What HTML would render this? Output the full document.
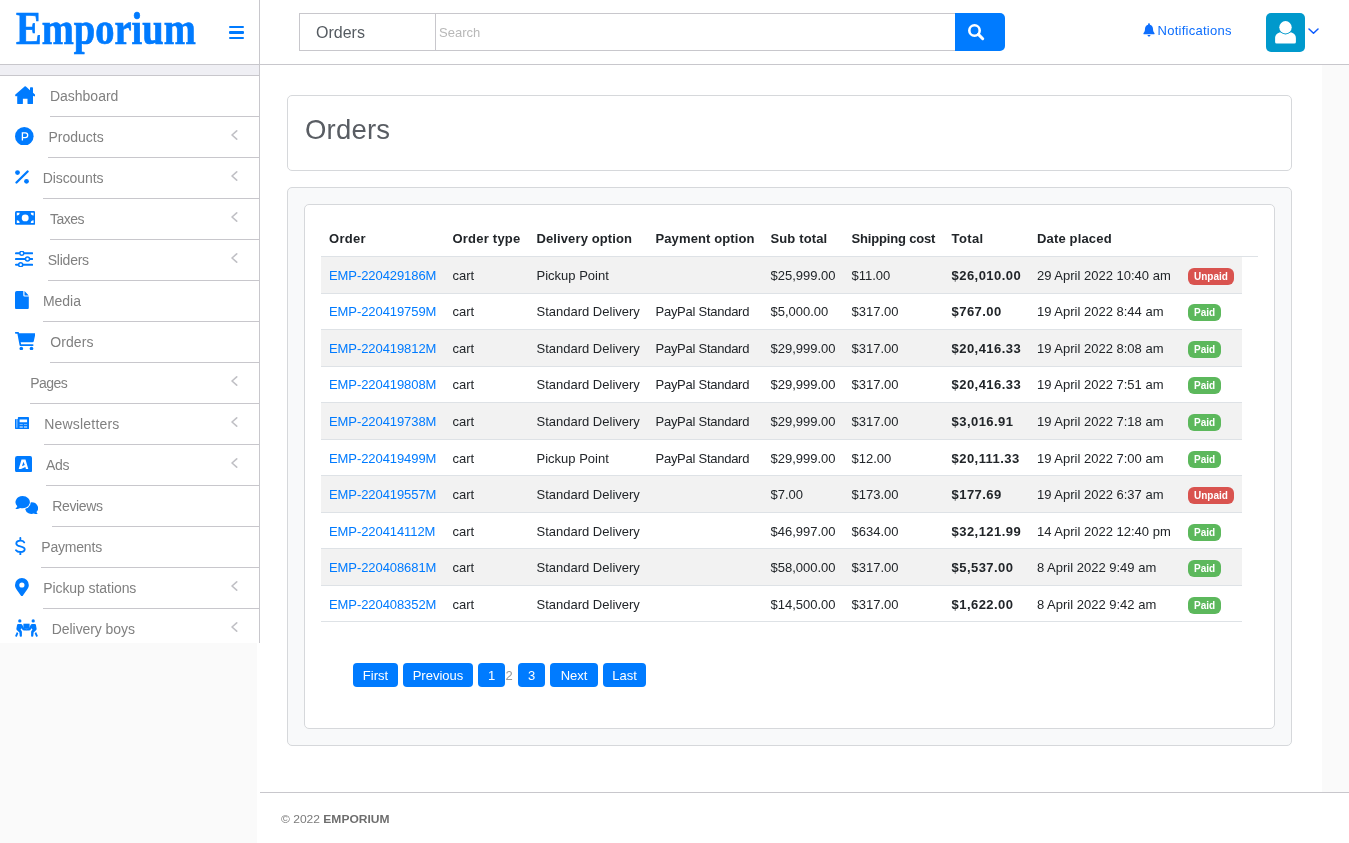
<!DOCTYPE html>
<html lang="en">
<head>
<meta charset="utf-8">
<title>Orders - Emporium</title>
<style>
*{box-sizing:border-box;margin:0;padding:0}
html,body{width:1349px;height:843px;overflow:hidden;background:#fff}
body{font-family:"Liberation Sans",sans-serif;font-size:13px;color:#212529;position:relative;will-change:transform}
a{text-decoration:none;color:#007bff}
/* ---------- top bar ---------- */
#topbar{position:absolute;left:0;top:0;width:1349px;height:65px;background:#fff;border-bottom:1px solid #c8c7cc}
#logo{position:absolute;left:16px;top:2.2px;font-family:"Liberation Serif",serif;font-weight:bold;font-size:45.6px;line-height:54px;color:#007bff;-webkit-text-stroke:.7px #007bff;transform-origin:0 0;transform:scaleX(.845);white-space:nowrap}
#burger{position:absolute;left:229px;top:26px;width:15px;height:13px}
#burger i{position:absolute;left:0;width:15px;height:2.2px;border-radius:1px;background:#007bff}
#search{position:absolute;left:299px;top:13px;height:38px;width:706px}
#search .sel{position:absolute;left:0;top:0;width:137px;height:38px;border:1px solid #c8c7cc;font-size:16px;line-height:38px;padding-left:16px;color:#555b61}
#search .inp{position:absolute;left:136px;top:0;width:521px;height:38px;border:1px solid #c8c7cc;font-size:13px;line-height:37px;padding-left:3px;color:#b8b8b8}
#search .btn{position:absolute;left:656px;top:0;width:50px;height:38px;background:#007bff;border-radius:0 5px 5px 0}
#notif{position:absolute;left:1142.6px;top:23px;font-size:13px;line-height:16px;color:#0d6efd;white-space:nowrap;letter-spacing:.27px}
#avatar{position:absolute;left:1266px;top:13px;width:39px;height:39px;border-radius:5px;background:#0099cc;overflow:hidden}
#caret{position:absolute;left:1307.8px;top:27.6px}
/* ---------- sidebar ---------- */
#side{position:absolute;left:0;top:0;width:260px;height:643px;border-right:1px solid #c8c7cc;background:transparent}
#band{position:absolute;left:0;top:65px;width:259px;height:11px;background:#efeff4;border-bottom:1px solid #c8c7cc}
#menu{position:absolute;left:0;top:76px;width:259px;list-style:none;background:#fff}
#menu li{position:relative;height:41px;display:flex;align-items:stretch;padding-left:15px}
#menu li:last-child{height:34px}
#menu .ic{flex:none;height:38px;display:flex;align-items:center}
#menu .tx{flex:1;margin-left:15px;height:41px;border-bottom:1px solid #c8c7cc;font-size:14px;line-height:40px;color:#808080;white-space:nowrap}
#menu li:last-child .tx{border-bottom:0}
#menu .noic .tx{margin-left:15px}
#menu .chev{position:absolute;left:231px;top:13.4px}
#below{position:absolute;left:0;top:643px;width:257px;height:200px;background:#fafafa}
/* ---------- content ---------- */
#rightcol{position:absolute;left:1322px;top:65px;width:27px;height:727px;background:#fafafa}
.card{position:absolute;border:1px solid #d6d8db;border-radius:5px}
#c1{left:287px;top:95px;width:1005px;height:76px;background:#fff}
#c1 h1{position:absolute;left:17px;top:16.8px;font-size:27.5px;line-height:34px;font-weight:normal;color:#595d63;letter-spacing:.2px}
#c2{left:287px;top:187px;width:1005px;height:559px;background:#f8f9fa}
#c3{left:304px;top:204px;width:971px;height:525px;background:#fff}
table{position:absolute;left:321px;top:220.5px;width:937px;border-collapse:separate;border-spacing:0;table-layout:fixed;font-size:13px;line-height:19.5px}
th{text-align:left;font-weight:bold;padding:8px;height:36.5px;border-bottom:1px solid #dee2e6;white-space:nowrap;color:#212529}
td{padding:8.5px 8px 7.5px;height:36.5px;border-bottom:1px solid #dee2e6;white-space:nowrap;overflow:visible}
tbody tr:nth-child(6) td,tbody tr:nth-child(8) td,tbody tr:nth-child(10) td{padding:9.5px 8px 6.5px}
td.x{border:0;background:transparent!important}
tbody tr:nth-child(odd) td{background:#f2f2f2}
td b{font-weight:bold;letter-spacing:.46px}
td a{color:#007bff;letter-spacing:-.08px}
.bd{display:inline-block;font-size:10px;font-weight:bold;line-height:17px;height:17px;color:#fff;border-radius:6px;padding:0 6px;vertical-align:middle;position:relative;top:0}
.bd.r{background:#d9534f;width:46px}
.bd.g{background:#5cb85c;width:33px}
#pg{position:absolute;left:353px;top:663px;height:24px;white-space:nowrap;font-size:13px;line-height:26px}
#pg a{position:absolute;top:0;height:24px;background:#007bff;color:#fff;border-radius:4px;text-align:center}
#pg span{position:absolute;top:0;color:#999}
#footer{position:absolute;left:260px;top:792px;width:1089px;height:51px;border-top:1px solid #c8c7cc;background:#fff;font-size:12px;color:#7b7b7b;line-height:16px}
#footer div{position:absolute;left:20.6px;top:17.5px;white-space:nowrap;font-size:10.9px;transform:scaleX(1.105);transform-origin:0 50%}
#footer b{color:#6e6e6e}
</style>
</head>
<body>
<div id="topbar">
  <div id="logo">Emporium</div>
  <div id="burger"><i style="top:0"></i><i style="top:5.4px"></i><i style="top:10.8px"></i></div>
  <div id="search">
    <div class="sel">Orders</div>
    <div class="inp">Search</div>
    <div class="btn"><svg width="50" height="38" viewBox="0 0 50 38"><circle cx="19.5" cy="17.5" r="5.2" fill="none" stroke="#fff" stroke-width="2.6"/><path d="M23.4 21.4l4.3 4.3" stroke="#fff" stroke-width="3" stroke-linecap="round"/></svg></div>
  </div>
  <div id="notif"><svg width="12" height="13.7" viewBox="0 0 12 13" preserveAspectRatio="none" style="position:absolute;left:0;top:0.3px"><path d="M6 0.300c.5 0 .9.400.9.900v.400c1.900.400 3.100 1.900 3.100 3.900 0 2.300.700 3.300 1.400 4 .200.200.300.500.200.800-.100.300-.400.500-.700.500H1.100c-.300 0-.600-.200-.700-.500-.100-.300 0-.600.200-.800.700-.700 1.400-1.700 1.400-4 0-2 1.200-3.500 3.100-3.900v-.400c0-.500.400-.900.900-.900zM4.500 11.400h3c0 .800-.700 1.500-1.500 1.500s-1.500-.700-1.500-1.500z" fill="#0d6efd"/></svg><span style="position:absolute;left:14.9px;top:0.3px">Notifications</span></div>
  <div id="avatar"><svg width="39" height="39" viewBox="0 0 39 39"><path d="M9.100 28.900V25C9.100 21 13.200 18.600 19.500 18.600S29.900 21 29.900 25V28.900Q29.900 30.400 28.400 30.400H10.600Q9.100 30.400 9.100 28.900z" fill="#fff"/><circle cx="19.500" cy="14.300" r="7.100" fill="#0099cc"/><circle cx="19.500" cy="14.300" r="6.200" fill="#fff"/></svg></div>
  <svg id="caret" width="11" height="7" viewBox="0 0 11 7"><path d="M1 1l4.500 4.300L10 1" fill="none" stroke="#0d5cff" stroke-width="1.500" stroke-linecap="round" stroke-linejoin="round"/></svg>
</div>

<div id="band"></div>
<ul id="menu">
  <li><span class="ic"><svg width="20.4" height="18.3" viewBox="0 0 20.4 18.3" ><path fill="#007bff" d="M10.2 0.100L0.400 8.500Q-0.200 9.200 0.400 9.900L1.100 10.600L2.200 9.800V17.400Q2.200 18.100 2.900 18.100H7.200Q7.900 18.100 7.900 17.400V12.800H12.500V17.400Q12.500 18.100 13.200 18.100H17.300Q18 18.100 18 17.400V9.800L19.300 10.600L20 9.900Q20.600 9.200 20 8.500L18 6.800V1.900Q18 1.200 17.300 1.200H15.700Q15 1.200 15 1.900V4.200L10.900 0.600Q10.200 -0.100 9.500 0.600z"/></svg></span><span class="tx" style="margin-left:14.5px">Dashboard</span></li>
  <li><span class="ic"><svg width="18.6" height="18.6" viewBox="0 0 18.6 18.6" ><circle cx="9.3" cy="9.3" r="9.3" fill="#007bff"/><path d="M7.400 13.500V5.900H10.300a2.400 2.400 0 0 1 0 4.800H7.400" fill="none" stroke="#fff" stroke-width="1.300" stroke-linejoin="miter"/></svg></span><span class="tx" style="margin-left:14.9px">Products</span><svg class="chev" width="7" height="10" viewBox="0 0 7 10"><path d="M5.700 0.900L1 5L5.700 9.100" fill="none" stroke="#c0c0c5" stroke-width="1.600" stroke-linecap="round" stroke-linejoin="round"/></svg></li>
  <li><span class="ic"><svg width="14" height="14" viewBox="0 0 14 14" ><circle cx="2.5" cy="2.6" r="2.4" fill="#007bff"/><circle cx="11.5" cy="11.300" r="2.4" fill="#007bff"/><path d="M1.500 12.500L12.600 1.500" stroke="#007bff" stroke-width="2.300" stroke-linecap="round"/></svg></span><span class="tx" style="letter-spacing:-0.09px;margin-left:13.7px">Discounts</span><svg class="chev" width="7" height="10" viewBox="0 0 7 10"><path d="M5.700 0.900L1 5L5.700 9.100" fill="none" stroke="#c0c0c5" stroke-width="1.600" stroke-linecap="round" stroke-linejoin="round"/></svg></li>
  <li><span class="ic"><svg width="20.4" height="14" viewBox="0 0 20.4 14" ><rect x="0" y="0" width="20.4" height="13.800" rx="1.600" fill="#007bff"/><circle cx="10.2" cy="6.9" r="3.450" fill="#fff"/><path d="M1.800 4.600V1.800H4.600A2.800 2.800 0 0 1 1.800 4.600zM18.600 4.600V1.800H15.800A2.800 2.800 0 0 0 18.600 4.600zM1.800 9.200V12H4.600A2.800 2.800 0 0 0 1.800 9.200zM18.600 9.200V12H15.800A2.800 2.800 0 0 1 18.600 9.200z" fill="#fff"/></svg></span><span class="tx" style="letter-spacing:-0.5px;margin-left:14.5px">Taxes</span><svg class="chev" width="7" height="10" viewBox="0 0 7 10"><path d="M5.700 0.900L1 5L5.700 9.100" fill="none" stroke="#c0c0c5" stroke-width="1.600" stroke-linecap="round" stroke-linejoin="round"/></svg></li>
  <li><span class="ic"><svg width="18.2" height="16" viewBox="0 0 18.2 16" ><path d="M1 2.300H17.200M1 8H17.200M1 13.700H17.200" stroke="#007bff" stroke-width="2.100" stroke-linecap="round"/><circle cx="6.8" cy="2.3" r="2" fill="#fff" stroke="#007bff" stroke-width="1.500"/><circle cx="12.5" cy="8" r="2" fill="#fff" stroke="#007bff" stroke-width="1.500"/><circle cx="5.7" cy="13.7" r="2" fill="#fff" stroke="#007bff" stroke-width="1.500"/></svg></span><span class="tx" style="letter-spacing:-0.25px;margin-left:14.6px">Sliders</span><svg class="chev" width="7" height="10" viewBox="0 0 7 10"><path d="M5.700 0.900L1 5L5.700 9.100" fill="none" stroke="#c0c0c5" stroke-width="1.600" stroke-linecap="round" stroke-linejoin="round"/></svg></li>
  <li><span class="ic"><svg width="13.8" height="18.3" viewBox="0 0 13.8 18.3" ><path fill="#007bff" d="M1.800 0H8.300V4.300Q8.300 5.600 9.600 5.600H13.800V16.500Q13.800 18.300 12 18.300H1.800Q0 18.300 0 16.500V1.800Q0 0 1.800 0zM9.500 0.100L13.700 4.400H9.500z"/></svg></span><span class="tx" style="letter-spacing:-0.05px;margin-left:14.2px">Media</span></li>
  <li><span class="ic"><svg width="20.4" height="18.4" viewBox="0 0 20.4 18.4" ><path d="M0.800 0.800H3.100L5.400 13.050H17.700" fill="none" stroke="#007bff" stroke-width="1.700" stroke-linecap="round" stroke-linejoin="round"/><path d="M3.300 1.200H19.600Q20.600 1.200 20.350 2.200L18.700 9.500Q18.500 10.300 17.700 10.300H5.100z" fill="#007bff"/><circle cx="6.300" cy="16.500" r="1.800" fill="#007bff"/><circle cx="16.500" cy="16.500" r="1.800" fill="#007bff"/></svg></span><span class="tx" style="letter-spacing:0.1px;margin-left:14.8px">Orders</span></li>
  <li class="noic"><span class="tx" style="letter-spacing:-0.55px;margin-left:15.3px">Pages</span><svg class="chev" width="7" height="10" viewBox="0 0 7 10"><path d="M5.700 0.900L1 5L5.700 9.100" fill="none" stroke="#c0c0c5" stroke-width="1.600" stroke-linecap="round" stroke-linejoin="round"/></svg></li>
  <li><span class="ic"><svg width="14" height="12.4" viewBox="0 0 14 12.4" ><path fill="#007bff" fill-rule="evenodd" d="M2.850 0.800A0.800 0.800 0 0 1 3.650 0H13.200A0.800 0.800 0 0 1 14 0.800V11.600A0.800 0.800 0 0 1 13.200 12.400H1.400A1.400 1.400 0 0 1 0 11V2.700A0.800 0.800 0 0 1 0.800 1.900H1.600V10.500A0.330 0.330 0 0 0 2.250 10.500V1.900H2.850zM4.600 2.400V5.300H12.100V2.400zM4.600 9.400V10.400H7.800V9.400zM8.900 9.400V10.400H12.100V9.400z"/><path d="M4.600 7.200V8H7.800V7.200zM8.900 7.200V8H12.100V7.200z" fill="#fff" opacity=".6"/></svg></span><span class="tx" style="letter-spacing:0.2px;margin-left:15.2px">Newsletters</span><svg class="chev" width="7" height="10" viewBox="0 0 7 10"><path d="M5.700 0.900L1 5L5.700 9.100" fill="none" stroke="#c0c0c5" stroke-width="1.600" stroke-linecap="round" stroke-linejoin="round"/></svg></li>
  <li><span class="ic"><svg width="17.1" height="16.4" viewBox="0 0 17.1 16.4" ><rect width="17.100" height="16.400" rx="2.300" fill="#007bff"/><path d="M6.500 3.400H10.500L13.300 12.900H10.900L10.400 10.900L6 12.900H3.700zM8.400 5.700L7 10.200L9.800 9.100z" fill="#fff" fill-rule="evenodd"/></svg></span><span class="tx" style="letter-spacing:-0.4px;margin-left:14px">Ads</span><svg class="chev" width="7" height="10" viewBox="0 0 7 10"><path d="M5.700 0.900L1 5L5.700 9.100" fill="none" stroke="#c0c0c5" stroke-width="1.600" stroke-linecap="round" stroke-linejoin="round"/></svg></li>
  <li><span class="ic"><svg width="23.4" height="18.8" viewBox="0 0 23.4 18.8" ><ellipse cx="16.600" cy="12.100" rx="7.200" ry="6.100" fill="#fff"/><path d="M16.600 6.300a6.500 5.800 0 0 1 4.900 9.600c.5 1.200 1.200 2.100 1.800 2.600-1.700.2-3.300-.3-4.300-1a6.500 5.800 0 1 1-2.400-11.200z" fill="#007bff"/><ellipse cx="7.600" cy="6.400" rx="8.100" ry="6.800" fill="#fff"/><path d="M7.600 0.100a7.300 6.100 0 1 1-2.600 11.800c-1.100.8-2.800 1.200-4.700 1 .700-.500 1.500-1.500 2-2.700A7.300 6.100 0 0 1 7.600 0.100z" fill="#007bff"/></svg></span><span class="tx" style="letter-spacing:-0.35px;margin-left:13.8px">Reviews</span></li>
  <li><span class="ic"><svg width="10.7" height="18.5" viewBox="0 0 10.7 18.5" ><path d="M9.200 5.400C8.600 4.200 7.300 3.600 5.400 3.600C3 3.600 1.300 4.700 1.300 6.400C1.300 8.300 3 8.800 5.300 9.300C7.800 9.850 9.700 10.400 9.700 12.300C9.700 14.100 7.900 15 5.400 15C3.300 15 1.700 14.300 1 13.200M5.350 0.900V3.200M5.350 15.200V17.600" fill="none" stroke="#007bff" stroke-width="1.850" stroke-linecap="round"/></svg></span><span class="tx" style="letter-spacing:-0.2px;margin-left:15.6px">Payments</span></li>
  <li><span class="ic"><svg width="13.8" height="18.3" viewBox="0 0 13.8 18.3" ><path fill="#007bff" fill-rule="evenodd" d="M6.200 17.900C1 10.600 0 9.700 0 6.900A6.900 6.900 0 0 1 13.800 6.900C13.800 9.700 12.800 10.600 7.600 17.900Q6.900 18.700 6.200 17.900zM6.900 9.600A2.600 2.600 0 1 0 6.900 4.400A2.600 2.600 0 1 0 6.900 9.600z"/></svg></span><span class="tx" style="letter-spacing:-0.07px;margin-left:14.4px">Pickup stations</span><svg class="chev" width="7" height="10" viewBox="0 0 7 10"><path d="M5.700 0.900L1 5L5.700 9.100" fill="none" stroke="#c0c0c5" stroke-width="1.600" stroke-linecap="round" stroke-linejoin="round"/></svg></li>
  <li><span class="ic"><svg width="23" height="18.8" viewBox="0 0 23 18.8" ><g fill="#007bff"><path d="M3.100 4.900H5.900Q6.900 4.900 7.400 5.900L8.600 8.500Q9 9.300 9.900 9.300H11.800V11.500H9.200Q7.800 11.500 7.100 10.300L6.500 9.200L5.600 10.600L6.600 12Q6.900 12.400 6.900 13V17Q6.900 17.800 6.100 17.800H5.600Q4.800 17.800 4.700 17L4.400 13.400L2 11.200Q1.200 10.500 1.400 9.400L2.100 5.800Q2.300 4.900 3.100 4.900zM1.900 13L3.300 14.300L2.100 17.200Q1.800 17.900 1.100 17.700L0.600 17.500Q0 17.200 0.300 16.500z"/><circle cx="4.800" cy="1.900" r="1.650"/><g transform="translate(23,0) scale(-1,1)"><path d="M3.100 4.900H5.900Q6.900 4.900 7.400 5.900L8.600 8.500Q9 9.300 9.900 9.300H11.500V11.500H9.200Q7.800 11.500 7.100 10.300L6.500 9.200L5.600 10.600L6.600 12Q6.900 12.400 6.900 13V17Q6.900 17.800 6.100 17.800H5.600Q4.800 17.800 4.700 17L4.400 13.400L2 11.200Q1.200 10.500 1.400 9.400L2.100 5.800Q2.300 4.900 3.100 4.900zM1.900 13L3.300 14.300L2.100 17.200Q1.800 17.900 1.100 17.700L0.600 17.500Q0 17.200 0.300 16.500z"/><circle cx="4.800" cy="1.900" r="1.650"/></g><rect x="8.400" y="4.700" width="6.200" height="4.800"/></g></svg></span><span class="tx" style="letter-spacing:-0.07px;margin-left:13.8px">Delivery boys</span><svg class="chev" width="7" height="10" viewBox="0 0 7 10"><path d="M5.700 0.900L1 5L5.700 9.100" fill="none" stroke="#c0c0c5" stroke-width="1.600" stroke-linecap="round" stroke-linejoin="round"/></svg></li>
</ul>
<div id="side"></div>
<div id="below"></div>
<div id="rightcol"></div>

<div class="card" id="c1"><h1>Orders</h1></div>
<div class="card" id="c2"></div>
<div class="card" id="c3"></div>

<table>
<colgroup><col style="width:123.5px"><col style="width:84px"><col style="width:119px"><col style="width:115px"><col style="width:81px"><col style="width:100px"><col style="width:85.5px"><col style="width:151px"><col style="width:62px"><col style="width:16px"></colgroup>
<thead><tr><th style="letter-spacing:0.3px">Order</th><th style="letter-spacing:0.22px">Order type</th><th style="letter-spacing:0.11px">Delivery option</th><th style="letter-spacing:0.11px">Payment option</th><th style="letter-spacing:0.13px">Sub total</th><th style="letter-spacing:-0.17px">Shipping cost</th><th style="letter-spacing:0.4px">Total</th><th style="letter-spacing:0.16px">Date placed</th><th></th><th></th></tr></thead>
<tbody>
<tr><td><a>EMP-220429186M</a></td><td>cart</td><td>Pickup Point</td><td style="letter-spacing:-.26px"></td><td>$25,999.00</td><td>$11.00</td><td><b>$26,010.00</b></td><td>29 April 2022 10:40 am</td><td><span class="bd r">Unpaid</span></td><td class="x"></td></tr>
<tr><td><a>EMP-220419759M</a></td><td>cart</td><td>Standard Delivery</td><td style="letter-spacing:-.26px">PayPal Standard</td><td>$5,000.00</td><td>$317.00</td><td><b>$767.00</b></td><td>19 April 2022 8:44 am</td><td><span class="bd g">Paid</span></td><td class="x"></td></tr>
<tr><td><a>EMP-220419812M</a></td><td>cart</td><td>Standard Delivery</td><td style="letter-spacing:-.26px">PayPal Standard</td><td>$29,999.00</td><td>$317.00</td><td><b>$20,416.33</b></td><td>19 April 2022 8:08 am</td><td><span class="bd g">Paid</span></td><td class="x"></td></tr>
<tr><td><a>EMP-220419808M</a></td><td>cart</td><td>Standard Delivery</td><td style="letter-spacing:-.26px">PayPal Standard</td><td>$29,999.00</td><td>$317.00</td><td><b>$20,416.33</b></td><td>19 April 2022 7:51 am</td><td><span class="bd g">Paid</span></td><td class="x"></td></tr>
<tr><td><a>EMP-220419738M</a></td><td>cart</td><td>Standard Delivery</td><td style="letter-spacing:-.26px">PayPal Standard</td><td>$29,999.00</td><td>$317.00</td><td><b>$3,016.91</b></td><td>19 April 2022 7:18 am</td><td><span class="bd g">Paid</span></td><td class="x"></td></tr>
<tr><td><a>EMP-220419499M</a></td><td>cart</td><td>Pickup Point</td><td style="letter-spacing:-.26px">PayPal Standard</td><td>$29,999.00</td><td>$12.00</td><td><b>$20,111.33</b></td><td>19 April 2022 7:00 am</td><td><span class="bd g">Paid</span></td><td class="x"></td></tr>
<tr><td><a>EMP-220419557M</a></td><td>cart</td><td>Standard Delivery</td><td style="letter-spacing:-.26px"></td><td>$7.00</td><td>$173.00</td><td><b>$177.69</b></td><td>19 April 2022 6:37 am</td><td><span class="bd r">Unpaid</span></td><td class="x"></td></tr>
<tr><td><a>EMP-220414112M</a></td><td>cart</td><td>Standard Delivery</td><td style="letter-spacing:-.26px"></td><td>$46,997.00</td><td>$634.00</td><td><b>$32,121.99</b></td><td>14 April 2022 12:40 pm</td><td><span class="bd g">Paid</span></td><td class="x"></td></tr>
<tr><td><a>EMP-220408681M</a></td><td>cart</td><td>Standard Delivery</td><td style="letter-spacing:-.26px"></td><td>$58,000.00</td><td>$317.00</td><td><b>$5,537.00</b></td><td>8 April 2022 9:49 am</td><td><span class="bd g">Paid</span></td><td class="x"></td></tr>
<tr><td><a>EMP-220408352M</a></td><td>cart</td><td>Standard Delivery</td><td style="letter-spacing:-.26px"></td><td>$14,500.00</td><td>$317.00</td><td><b>$1,622.00</b></td><td>8 April 2022 9:42 am</td><td><span class="bd g">Paid</span></td><td class="x"></td></tr>
</tbody>
</table>

<div id="pg">
  <a style="left:0;width:45px">First</a>
  <a style="left:50px;width:70px">Previous</a>
  <a style="left:125px;width:27px">1</a>
  <span style="left:152.500px">2</span>
  <a style="left:165px;width:27px">3</a>
  <a style="left:197px;width:48px">Next</a>
  <a style="left:250px;width:43px">Last</a>
</div>

<div id="footer"><div>© 2022 <b>EMPORIUM</b></div></div>
</body>
</html>
